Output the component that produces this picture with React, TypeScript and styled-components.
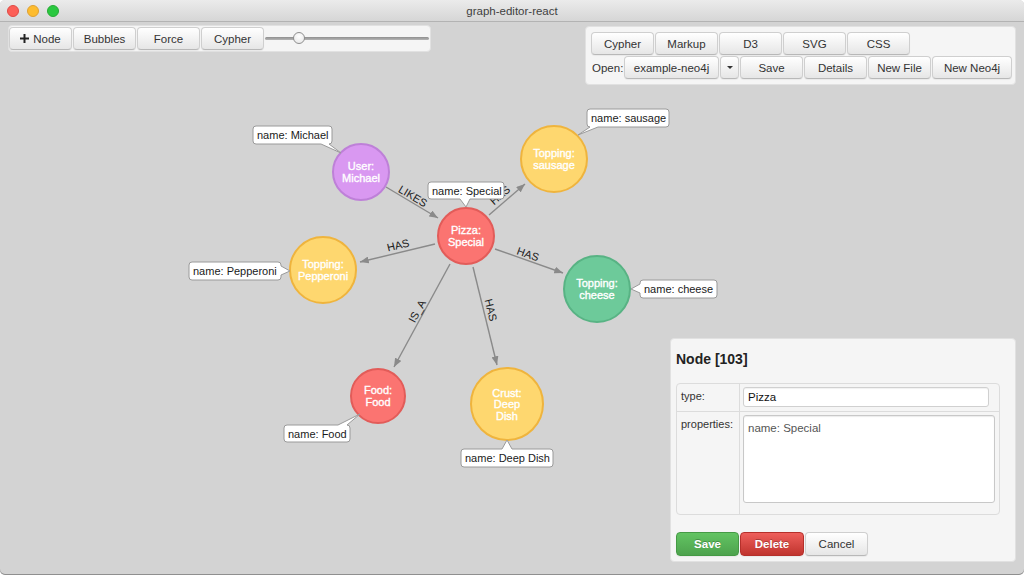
import React from "react";
import styled, { createGlobalStyle } from "styled-components";

const GlobalStyle = createGlobalStyle`
  html, body { margin: 0; padding: 0; background: #ffffff; }
  body { font-family: "Liberation Sans", Arial, Helvetica, sans-serif; }
  * { box-sizing: border-box; }
`;

const Window = styled.div`
  width: 1024px;
  height: 575px;
  display: flex;
  flex-direction: column;
  border-radius: 5px;
  overflow: hidden;
  background: #d3d3d3;
  box-shadow: inset 0 -1px 0 #8f8f8f;
`;

const TitleBar = styled.div`
  height: 22px;
  flex: none;
  display: grid;
  grid-template-columns: 1fr auto 1fr;
  align-items: center;
  background: linear-gradient(#ebebeb, #d6d6d6);
  border-bottom: 1px solid #b3b3b3;
`;

const Lights = styled.div`
  display: flex;
  gap: 8px;
  padding-left: 7px;
`;

const Light = styled.span<{ $c: string; $b: string }>`
  width: 12px;
  height: 12px;
  border-radius: 50%;
  background: ${(p) => p.$c};
  border: 0.5px solid ${(p) => p.$b};
`;

const Title = styled.div`
  font-size: 11.5px;
  color: #3f3f3f;
  padding-top: 1px;
`;

const Canvas = styled.div`
  flex: 1;
  position: relative;
`;

const GraphLayer = styled.svg`
  position: absolute;
  left: 0;
  top: 0;
  width: 1024px;
  height: 553px;
  font-family: "Liberation Sans", Arial, sans-serif;
`;

const Overlay = styled.div`
  position: relative;
  z-index: 1;
  height: 100%;
  display: flex;
  flex-direction: column;
  justify-content: space-between;
  padding: 3px 8px 13px 8px;
`;

const TopRow = styled.div`
  display: flex;
  justify-content: space-between;
  align-items: flex-start;
`;

const Well = styled.div`
  background: #f5f5f5;
  border: 1px solid #e1e1e1;
  border-radius: 4px;
`;

const Toolbar = styled(Well)`
  width: 423px;
  display: flex;
  align-items: center;
  gap: 1px;
  padding: 1px 0;
`;

const Btn = styled.button<{ $w?: number; $h?: number }>`
  width: ${(p) => (p.$w ? `${p.$w}px` : "auto")};
  height: ${(p) => p.$h ?? 23}px;
  padding: 0;
  margin: 0;
  flex: none;
  font-family: "Liberation Sans", Arial, sans-serif;
  font-size: 11.5px;
  color: #333;
  background: linear-gradient(#ffffff, #e6e6e6);
  border: 1px solid #cfcfcf;
  border-bottom-color: #b8b8b8;
  border-radius: 4px;
  box-shadow: 0 1px 1px rgba(0, 0, 0, 0.05);
  display: flex;
  align-items: center;
  justify-content: center;
  gap: 4px;
`;

const ColorBtn = styled(Btn)<{ $top: string; $bottom: string; $border: string }>`
  color: #fff;
  font-weight: bold;
  background: linear-gradient(${(p) => p.$top}, ${(p) => p.$bottom});
  border-color: ${(p) => p.$border};
  text-shadow: 0 -1px 0 rgba(0, 0, 0, 0.25);
`;

const Slider = styled.div`
  flex: 1;
  height: 23px;
  display: flex;
  align-items: center;
  padding-right: 1px;
`;

const Track = styled.div`
  position: relative;
  flex: 1;
  height: 3px;
  border-radius: 2px;
  background: linear-gradient(#8f8f8f, #b5b5b5);
`;

const Thumb = styled.span`
  position: absolute;
  left: 28px;
  top: -5px;
  width: 12px;
  height: 12px;
  border-radius: 50%;
  background: radial-gradient(circle at 50% 35%, #ffffff, #e4e4e4);
  border: 1px solid #8f8f8f;
`;

const RightPanel = styled(Well)`
  width: 431px;
  margin-top: 1px;
  padding: 5px;
  display: flex;
  flex-direction: column;
  gap: 1px;
`;

const BtnRow = styled.div`
  display: flex;
  align-items: center;
  gap: 1px;
`;

const OpenLabel = styled.span`
  width: 32px;
  font-size: 11.5px;
  color: #333;
  padding-left: 1px;
`;

const Caret = styled.span`
  width: 0;
  height: 0;
  border-left: 3px solid transparent;
  border-right: 3px solid transparent;
  border-top: 3px solid #333;
`;

const NodePanel = styled(Well)`
  align-self: flex-end;
  width: 346px;
  padding: 12px 5px 5px 5px;
  display: flex;
  flex-direction: column;
`;

const PanelTitle = styled.h3`
  margin: 0;
  font-size: 14px;
  line-height: 16px;
  font-weight: bold;
  color: #222;
`;

const PropTable = styled.div`
  margin-top: 16px;
  width: 324px;
  border: 1px solid #dcdcdc;
  border-radius: 4px;
  display: grid;
  grid-template-columns: 63px minmax(0, 1fr);
  grid-template-rows: 27px 103px;
`;

const LabelCell = styled.div<{ $first?: boolean }>`
  font-size: 11px;
  color: #333;
  padding: 6px 4px;
  border-right: 1px solid #dcdcdc;
  border-top: ${(p) => (p.$first ? "none" : "1px solid #dcdcdc")};
`;

const ValueCell = styled.div<{ $first?: boolean; $pr: number }>`
  padding: 3px ${(p) => p.$pr}px 0 3px;
  border-top: ${(p) => (p.$first ? "none" : "1px solid #dcdcdc")};
`;

const TypeInput = styled.div`
  height: 20px;
  display: flex;
  align-items: center;
  padding: 0 4px;
  font-size: 11.5px;
  color: #111;
  background: #fff;
  border: 1px solid #d0d0d0;
  border-radius: 3px;
  box-shadow: inset 0 1px 1px rgba(0, 0, 0, 0.06);
`;

const PropsArea = styled.div`
  height: 88px;
  padding: 6px 4px;
  font-size: 11.5px;
  color: #555;
  background: #fff;
  border: 1px solid #c8c8c8;
  border-radius: 3px;
  box-shadow: inset 0 1px 1px rgba(0, 0, 0, 0.08);
`;

const ActionRow = styled(BtnRow)`
  margin-top: 17px;
`;

type GNode = {
  x: number;
  y: number;
  r: number;
  fill: string;
  stroke: string;
  lines: string[];
};

const YELLOW = { fill: "#fed76f", stroke: "#efb43d" };
const RED = { fill: "#fb7471", stroke: "#e25c59" };

const nodes: GNode[] = [
  { x: 361, y: 172, r: 28, fill: "#d998f1", stroke: "#be80d8", lines: ["User:", "Michael"] },
  { x: 466, y: 236, r: 28, ...RED, lines: ["Pizza:", "Special"] },
  { x: 554, y: 159, r: 33, ...YELLOW, lines: ["Topping:", "sausage"] },
  { x: 323, y: 270, r: 33, ...YELLOW, lines: ["Topping:", "Pepperoni"] },
  { x: 597, y: 289, r: 33, fill: "#6dca9a", stroke: "#58b384", lines: ["Topping:", "cheese"] },
  { x: 378, y: 396, r: 27, ...RED, lines: ["Food:", "Food"] },
  { x: 507, y: 404, r: 36, ...YELLOW, lines: ["Crust:", "Deep", "Dish"] },
];

type Edge = { x1: number; y1: number; x2: number; y2: number; label: string; lx: number; ly: number; a: number };

const edges: Edge[] = [
  { x1: 386, y1: 187, x2: 438, y2: 218, label: "LIKES", lx: 413, ly: 196, a: 31 },
  { x1: 489, y1: 215, x2: 525, y2: 184, label: "HAS", lx: 500, ly: 195, a: -41 },
  { x1: 435, y1: 244, x2: 360, y2: 262, label: "HAS", lx: 398, ly: 245, a: -13.5 },
  { x1: 495, y1: 249, x2: 563, y2: 273, label: "HAS", lx: 528, ly: 254, a: 19.5 },
  { x1: 450, y1: 264, x2: 394, y2: 367, label: "IS_A", lx: 417, ly: 311, a: -61.5 },
  { x1: 473, y1: 267, x2: 497, y2: 365, label: "HAS", lx: 491, ly: 310, a: 76 },
];

type Side = "top" | "bottom" | "left" | "right";
type Bubble = { x: number; y: number; w: number; h: number; side: Side; t0: number; t1: number; tx: number; ty: number; text: string };

const bubbles: Bubble[] = [
  { x: 253, y: 126, w: 79, h: 18, side: "bottom", t0: 321, t1: 329, tx: 341, ty: 153, text: "name: Michael" },
  { x: 428, y: 182, w: 76, h: 17, side: "bottom", t0: 460, t1: 470, tx: 466, ty: 207, text: "name: Special" },
  { x: 587, y: 109, w: 82, h: 18, side: "bottom", t0: 590, t1: 598, tx: 578, ty: 135, text: "name: sausage" },
  { x: 189, y: 262, w: 92, h: 18, side: "right", t0: 266, t1: 275, tx: 290, ty: 271, text: "name: Pepperoni" },
  { x: 640, y: 280, w: 77, h: 18, side: "left", t0: 284, t1: 293, tx: 631, ty: 289, text: "name: cheese" },
  { x: 284, y: 425, w: 66, h: 17, side: "top", t0: 338, t1: 347, tx: 360, ty: 414, text: "name: Food" },
  { x: 461, y: 449, w: 92, h: 18, side: "top", t0: 502, t1: 512, tx: 507, ty: 440, text: "name: Deep Dish" },
];

function bubblePath(b: Bubble): string {
  const r = 3;
  const { x, y, w, h, side, t0, t1, tx, ty } = b;
  const p: string[] = [];
  p.push(`M${x + r},${y}`);
  if (side === "top") p.push(`L${t0},${y} L${tx},${ty} L${t1},${y}`);
  p.push(`L${x + w - r},${y} Q${x + w},${y} ${x + w},${y + r}`);
  if (side === "right") p.push(`L${x + w},${t0} L${tx},${ty} L${x + w},${t1}`);
  p.push(`L${x + w},${y + h - r} Q${x + w},${y + h} ${x + w - r},${y + h}`);
  if (side === "bottom") p.push(`L${t1},${y + h} L${tx},${ty} L${t0},${y + h}`);
  p.push(`L${x + r},${y + h} Q${x},${y + h} ${x},${y + h - r}`);
  if (side === "left") p.push(`L${x},${t1} L${tx},${ty} L${x},${t0}`);
  p.push(`L${x},${y + r} Q${x},${y} ${x + r},${y} Z`);
  return p.join(" ");
}

const EDGE = "#8a8a8a";

function Graph() {
  return (
    <GraphLayer viewBox="0 22 1024 553">
      <defs>
        <marker
          id="arrow"
          viewBox="0 0 10 8"
          refX="10"
          refY="4"
          markerWidth="9"
          markerHeight="7"
          markerUnits="userSpaceOnUse"
          orient="auto"
        >
          <path d="M0,0 L10,4 L0,8 z" fill={EDGE} />
        </marker>
      </defs>
      {edges.map((e, i) => (
        <g key={i}>
          <line x1={e.x1} y1={e.y1} x2={e.x2} y2={e.y2} stroke={EDGE} strokeWidth={1.4} markerEnd="url(#arrow)" />
          <text
            transform={`translate(${e.lx},${e.ly}) rotate(${e.a})`}
            textAnchor="middle"
            y={4}
            fontSize={11}
            fill="#1a1a1a"
          >
            {e.label}
          </text>
        </g>
      ))}
      {nodes.map((n, i) => {
        const start = n.y - ((n.lines.length - 1) * 11.5) / 2;
        return (
          <g key={i}>
            <circle cx={n.x} cy={n.y} r={n.r} fill={n.fill} stroke={n.stroke} strokeWidth={2} />
            {n.lines.map((l, j) => (
              <text
                key={j}
                x={n.x}
                y={start + j * 11.5 + 4}
                textAnchor="middle"
                fontSize={11}
                fill="#ffffff"
                stroke="#ffffff"
                strokeWidth={0.35}
              >
                {l}
              </text>
            ))}
          </g>
        );
      })}
      {bubbles.map((b, i) => (
        <g key={i}>
          <path d={bubblePath(b)} fill="#ffffff" stroke="#9a9a9a" strokeWidth={1} />
          <text x={b.x + 4} y={b.y + b.h / 2 + 4} fontSize={11} fill="#1a1a1a">
            {b.text}
          </text>
        </g>
      ))}
    </GraphLayer>
  );
}

function PlusIcon() {
  return (
    <svg width="9" height="9" viewBox="0 0 9 9">
      <path d="M3.5 0h2v3.5H9v2H5.5V9h-2V5.5H0v-2h3.5z" fill="#222" />
    </svg>
  );
}

export default function App() {
  return (
    <>
      <GlobalStyle />
      <Window>
        <TitleBar>
          <Lights>
            <Light $c="#fc5f57" $b="#de4a45" />
            <Light $c="#fdbc2e" $b="#dea032" />
            <Light $c="#2ac840" $b="#27aa35" />
          </Lights>
          <Title>graph-editor-react</Title>
          <span />
        </TitleBar>
        <Canvas>
          <Graph />
          <Overlay>
            <TopRow>
              <Toolbar>
                <Btn $w={63}>
                  <PlusIcon />
                  Node
                </Btn>
                <Btn $w={63}>Bubbles</Btn>
                <Btn $w={63}>Force</Btn>
                <Btn $w={63}>Cypher</Btn>
                <Slider>
                  <Track>
                    <Thumb />
                  </Track>
                </Slider>
              </Toolbar>
              <RightPanel>
                <BtnRow>
                  <Btn $w={63}>Cypher</Btn>
                  <Btn $w={63}>Markup</Btn>
                  <Btn $w={63}>D3</Btn>
                  <Btn $w={63}>SVG</Btn>
                  <Btn $w={63}>CSS</Btn>
                </BtnRow>
                <BtnRow>
                  <OpenLabel>Open:</OpenLabel>
                  <Btn $w={95}>example-neo4j</Btn>
                  <Btn $w={19}>
                    <Caret />
                  </Btn>
                  <Btn $w={63}>Save</Btn>
                  <Btn $w={63}>Details</Btn>
                  <Btn $w={63}>New File</Btn>
                  <Btn $w={80}>New Neo4j</Btn>
                </BtnRow>
              </RightPanel>
            </TopRow>
            <NodePanel>
              <PanelTitle>Node [103]</PanelTitle>
              <PropTable>
                <LabelCell $first>type:</LabelCell>
                <ValueCell $first $pr={10}>
                  <TypeInput>Pizza</TypeInput>
                </ValueCell>
                <LabelCell>properties:</LabelCell>
                <ValueCell $pr={4}>
                  <PropsArea>name: Special</PropsArea>
                </ValueCell>
              </PropTable>
              <ActionRow>
                <ColorBtn $w={63} $h={24} $top="#62c462" $bottom="#4ea34e" $border="#459a45">
                  Save
                </ColorBtn>
                <ColorBtn $w={64} $h={24} $top="#ee5f5b" $bottom="#c0342e" $border="#b5302b">
                  Delete
                </ColorBtn>
                <Btn $w={63} $h={24}>
                  Cancel
                </Btn>
              </ActionRow>
            </NodePanel>
          </Overlay>
        </Canvas>
      </Window>
    </>
  );
}
